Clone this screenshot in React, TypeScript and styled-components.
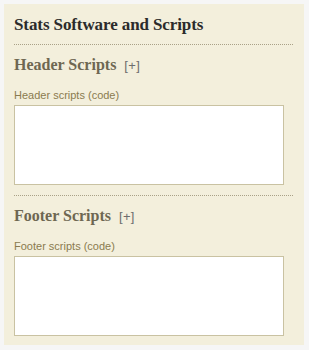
import styled, { createGlobalStyle } from 'styled-components'

const GlobalStyle = createGlobalStyle`
  html, body {
    margin: 0;
    padding: 0;
    background: #f6f6f6;
  }
`

const Page = styled.div`
  padding: 4px 5px 5px 4px;
`

const Panel = styled.div`
  background: #f3efdc;
  padding: 10px 11px 10px 10px;
  height: 341px;
  box-sizing: border-box;
`

const Title = styled.h2`
  margin: 0;
  font-family: 'Liberation Serif', 'Times New Roman', serif;
  font-size: 17px;
  line-height: 22px;
  letter-spacing: -0.1px;
  font-weight: bold;
  color: #2b2b2b;
  padding-bottom: 8px;
  border-bottom: 1px dotted #a9a187;
`

const Section = styled.div<{ divided?: boolean }>`
  padding-top: 10px;
  padding-bottom: ${(p) => (p.divided ? '10px' : '0')};
  border-bottom: ${(p) => (p.divided ? '1px dotted #a9a187' : 'none')};
`

const SectionTitle = styled.h3`
  margin: 0;
  font-family: 'Liberation Serif', 'Times New Roman', serif;
  font-size: 16px;
  line-height: 20px;
  font-weight: bold;
  color: #6e6752;
  display: flex;
  align-items: baseline;
  gap: 8px;
`

const Toggle = styled.span`
  font-family: 'Liberation Sans', Arial, sans-serif;
  font-size: 13px;
  font-weight: normal;
  letter-spacing: 0.3px;
  color: #6d6d6d;
  cursor: pointer;
`

const Label = styled.label`
  display: block;
  margin-top: 13px;
  margin-bottom: 3px;
  font-family: 'Liberation Sans', Arial, sans-serif;
  font-size: 11px;
  line-height: 13px;
  color: #8a7b4f;
`

const CodeBox = styled.textarea`
  display: block;
  width: 270px;
  height: 80px;
  box-sizing: border-box;
  margin: 0;
  border: 1px solid #c9c2a2;
  background: #fff;
  resize: none;
  outline: none;
`

const ScriptSection = ({
  title,
  label,
  divided,
}: {
  title: string
  label: string
  divided?: boolean
}) => (
  <Section divided={divided}>
    <SectionTitle>
      {title}
      <Toggle>[+]</Toggle>
    </SectionTitle>
    <Label>{label}</Label>
    <CodeBox />
  </Section>
)

const App = () => (
  <>
    <GlobalStyle />
    <Page>
      <Panel>
        <Title>Stats Software and Scripts</Title>
        <ScriptSection title="Header Scripts" label="Header scripts (code)" divided />
        <ScriptSection title="Footer Scripts" label="Footer scripts (code)" />
      </Panel>
    </Page>
  </>
)

export default App
